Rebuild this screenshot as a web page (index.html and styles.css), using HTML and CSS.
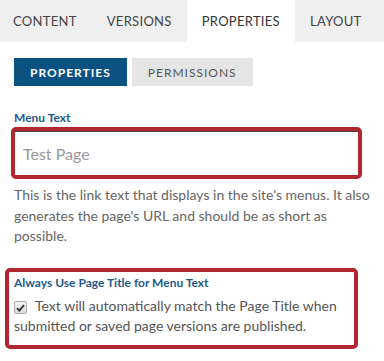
FILE: index.html
```html
<!DOCTYPE html>
<html lang="en">
<head>
<meta charset="UTF-8">
<title>Page Properties</title>
<link rel="stylesheet" href="styles.css">
</head>
<body>

<div class="tabs">
 <div class="tab first">CONTENT</div>
 <div class="tab">VERSIONS</div>
 <div class="tab active">PROPERTIES</div>
 <div class="tab">LAYOUT</div>
</div>

<div class="panel">
 <div class="sub-tabs">
  <button class="sub-tab selected">PROPERTIES</button>
  <button class="sub-tab">PERMISSIONS</button>
 </div>

 <label class="field-label" for="menuText">Menu Text</label>
 <div class="highlight input-box">
  <input id="menuText" class="text-input" type="text" placeholder="Test Page">
 </div>
 <p class="help">This is the link text that displays in the site's menus. It also generates the page's URL and should be as short as possible.</p>

 <div class="highlight check-box">
  <div class="field-label">Always Use Page Title for Menu Text</div>
  <label class="check-text"><span class="check"><svg width="9" height="8" viewBox="0 0 9 8"><path d="M1 4.2 L3.4 6.6 L8 1.2" fill="none" stroke="#333" stroke-width="1.8"/></svg></span>Text will automatically match the Page Title when submitted or saved page versions are published.</label>
 </div>
</div>

</body>
</html>
```

FILE: styles.css
```css
body, html {
 margin: 0;
 font-family: Lato, "Open Sans", sans-serif;
 background-color: #fff;
}
.tabs {
 display: flex;
 height: 42px;
 background-color: #efefef;
}
.tab {
 padding: 0 15px;
 line-height: 42px;
 font-size: 13px;
 letter-spacing: 0.3px;
 color: #444;
}
.tab.first {
 padding-left: 13px;
}
.tab.active {
 background-color: #fff;
 color: #333;
}
.panel {
 padding: 16px 14px 0 14px;
}
.sub-tabs {
 display: flex;
 gap: 5px;
}
.sub-tab {
 height: 28px;
 padding: 0 16px;
 border: none;
 background-color: #e5e5e5;
 color: #555;
 font-family: Lato, sans-serif;
 font-size: 12px;
 letter-spacing: 1px;
}
.sub-tab.selected {
 background-color: #0b5283;
 color: #fff;
 font-weight: bold;
}
.field-label {
 display: block;
 margin-top: 24px;
 font-size: 12px;
 font-weight: bold;
 color: #1d5a8a;
 line-height: 16px;
}
.highlight {
 border: 4px solid #b0272f;
 border-radius: 5px;
}
.input-box {
 margin: 1px 8px 0 -3px;
}
.text-input {
 display: block;
 width: 100%;
 box-sizing: border-box;
 height: 44px;
 padding: 0 8px;
 border: none;
 border-top: 1px solid #444;
 font-family: Lato, sans-serif;
 font-size: 16px;
 outline: none;
}
.text-input::placeholder {
 color: #999;
}
.help {
 margin: 6px 0 0 0;
 font-size: 14px;
 line-height: 20.5px;
 color: #666;
}
.check-box {
 margin: 21px 12px 0 -9px;
 padding: 3px 5px 8px 5px;
}
.check-box .field-label {
 margin-top: 0;
}
.check-text {
 display: block;
 margin-top: 5px;
 font-size: 14px;
 line-height: 20.5px;
 color: #555;
}
.check {
 display: inline-flex;
 align-items: center;
 justify-content: center;
 width: 11px;
 height: 11px;
 margin-right: 8px;
 vertical-align: -1px;
 border: 1px solid #aaa;
 border-radius: 2px;
 background: linear-gradient(#f4f4f4, #dcdcdc);
}
```
